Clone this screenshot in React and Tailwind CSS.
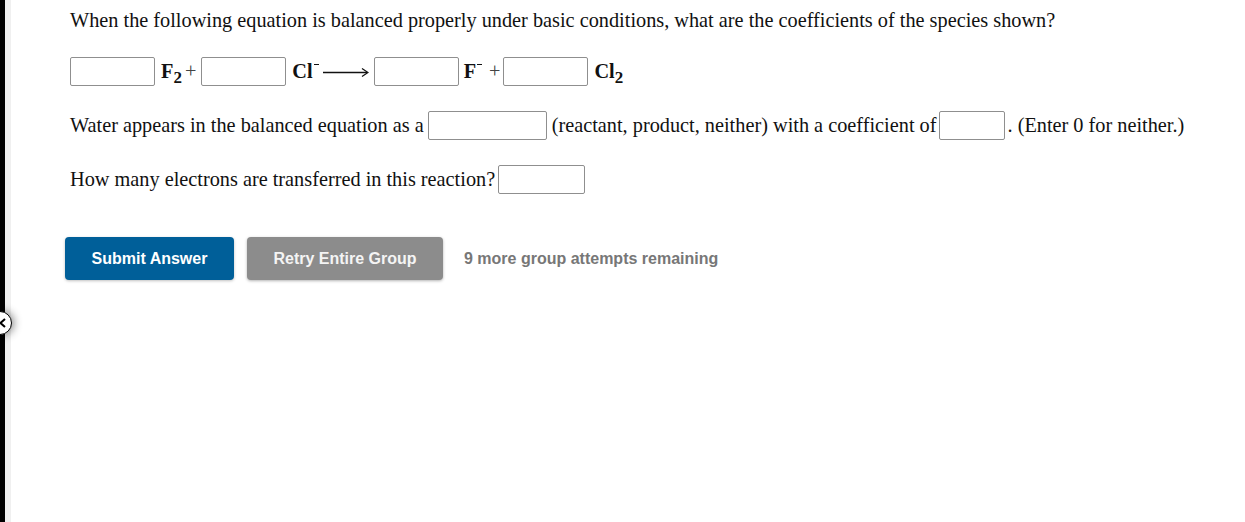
import React from "react";

function Box({ w = "w-[85px]" }) {
  return (
    <input
      type="text"
      className={`${w} h-[29px] border border-[#8f8f8f] rounded-[2px] bg-white outline-none`}
    />
  );
}

function Sub({ children }) {
  return <span className="inline-block text-[17px] translate-y-[5px]">{children}</span>;
}

function Minus() {
  return <span className="inline-block w-[5px] h-[1.5px] bg-[#111] ml-[1px] -translate-y-[7px]" />;
}

export default function App() {
  const serif = { fontFamily: '"Liberation Serif", "Times New Roman", serif' };
  const sans = { fontFamily: '"Liberation Sans", Arial, sans-serif' };

  return (
    <div className="relative flex w-[1245px] h-[522px] bg-white overflow-hidden">
      {/* left frame edge */}
      <div className="w-[5px] h-full bg-black shrink-0" />
      <div className="w-[6px] h-full bg-[#f0f0f0] shrink-0" />

      {/* collapse handle */}
      <div className="absolute left-[-12px] top-[311px] w-[24px] h-[24px] rounded-full bg-white border border-black shadow-[2px_0_8px_rgba(0,0,0,0.45)] flex items-center justify-end pr-[5px]">
        <svg width="7" height="10" viewBox="0 0 7 10">
          <path d="M6 1 L1.5 5 L6 9" stroke="#000" strokeWidth="2" fill="none" />
        </svg>
      </div>

      <div className="flex-1 pl-[59px] pt-[6px] text-[20.3px] text-[#111]" style={serif}>
        <p className="h-[28px] leading-[28px]">
          When the following equation is balanced properly under basic conditions, what are the coefficients of the species shown?
        </p>

        {/* equation */}
        <div className="flex items-center h-[29px] mt-[23px] leading-none">
          <Box />
          <span className="ml-[6px] font-bold flex items-baseline">
            F<Sub>2</Sub>
          </span>
          <span className="ml-[3px] text-[#444]">+</span>
          <span className="ml-[5px] flex"><Box /></span>
          <span className="ml-[6px] font-bold flex items-center">
            Cl<Minus />
          </span>
          <svg className="ml-[4px]" width="46" height="12" viewBox="0 0 46 12">
            <path d="M0 6.5 H44" stroke="#111" strokeWidth="1.3" />
            <path d="M39 2.5 L45 6.5 L39 10.5" stroke="#111" strokeWidth="1.3" fill="none" />
          </svg>
          <span className="ml-[5px] flex"><Box /></span>
          <span className="ml-[5px] font-bold flex items-center">
            F<Minus />
          </span>
          <span className="ml-[7px] text-[#444]">+</span>
          <span className="ml-[3px] flex"><Box /></span>
          <span className="ml-[6px] font-bold flex items-baseline">
            Cl<Sub>2</Sub>
          </span>
        </div>

        <div className="flex items-center h-[29px] mt-[25px]">
          <span>Water appears in the balanced equation as a</span>
          <span className="ml-[4px] flex"><Box w="w-[119px]" /></span>
          <span className="ml-[5px]">(reactant, product, neither) with a coefficient of</span>
          <span className="ml-[3px] flex"><Box w="w-[66px]" /></span>
          <span className="ml-[2px]">. (Enter 0 for neither.)</span>
        </div>

        <div className="flex items-center h-[29px] mt-[25px]">
          <span>How many electrons are transferred in this reaction?</span>
          <span className="ml-[3px] flex"><Box w="w-[87px]" /></span>
        </div>

        <div className="flex items-center mt-[43px] ml-[-5px]" style={sans}>
          <button className="w-[169px] h-[43px] rounded-[4px] bg-[#005f99] text-white text-[16px] font-bold shadow-[0_1px_3px_rgba(0,0,0,0.25)]">
            Submit Answer
          </button>
          <button className="ml-[13px] w-[196px] h-[43px] rounded-[4px] bg-[#8c8c8c] text-[#f4f4f4] text-[16px] font-bold shadow-[0_1px_3px_rgba(0,0,0,0.3)]">
            Retry Entire Group
          </button>
          <span className="ml-[21px] text-[16px] font-bold text-[#777]">
            9 more group attempts remaining
          </span>
        </div>
      </div>
    </div>
  );
}
